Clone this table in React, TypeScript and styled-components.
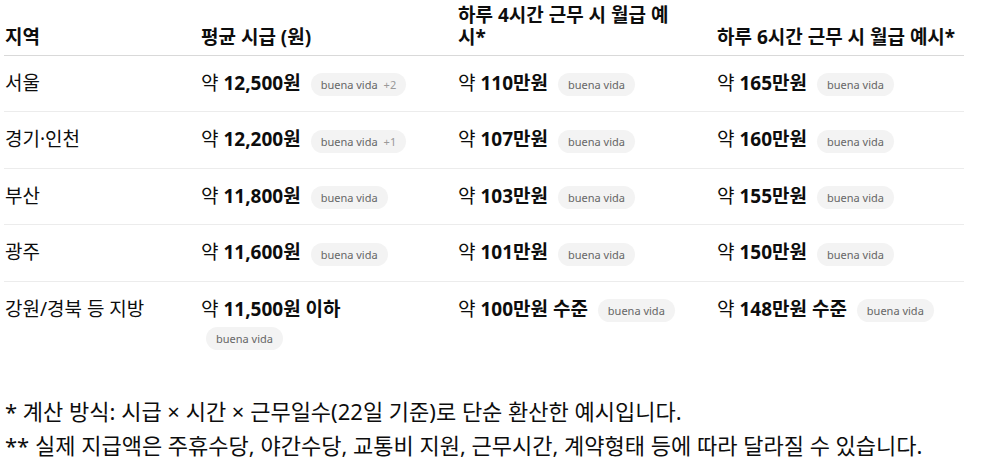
import styled, { createGlobalStyle } from 'styled-components';

type Badge = { label: string; extra?: string };
type Cell = { value: string; badge?: Badge };
type Row = { region: string; hourly: Cell; four: Cell; six: Cell };

const bv: Badge = { label: 'buena vida' };

const rows: Row[] = [
  {
    region: '서울',
    hourly: { value: '12,500원', badge: { label: 'buena vida', extra: '+2' } },
    four: { value: '110만원', badge: bv },
    six: { value: '165만원', badge: bv },
  },
  {
    region: '경기·인천',
    hourly: { value: '12,200원', badge: { label: 'buena vida', extra: '+1' } },
    four: { value: '107만원', badge: bv },
    six: { value: '160만원', badge: bv },
  },
  {
    region: '부산',
    hourly: { value: '11,800원', badge: bv },
    four: { value: '103만원', badge: bv },
    six: { value: '155만원', badge: bv },
  },
  {
    region: '광주',
    hourly: { value: '11,600원', badge: bv },
    four: { value: '101만원', badge: bv },
    six: { value: '150만원', badge: bv },
  },
  {
    region: '강원/경북 등 지방',
    hourly: { value: '11,500원 이하', badge: bv },
    four: { value: '100만원 수준', badge: bv },
    six: { value: '148만원 수준', badge: bv },
  },
];

// right padding per column (narrows the text area so headers / badges wrap like the source)
const padRight = [36, 44, 36, 0];

function Amount({ cell }: { cell: Cell }) {
  return (
    <>
      약 <Strong>{cell.value}</Strong>{' '}
      {cell.badge && (
        <Pill>
          {cell.badge.label}
          {cell.badge.extra && <PillExtra>{cell.badge.extra}</PillExtra>}
        </Pill>
      )}
    </>
  );
}

function App() {
  const heads = ['지역', '평균 시급 (원)', '하루 4시간 근무 시 월급 예시*', '하루 6시간 근무 시 월급 예시*'];
  return (
    <>
      <GlobalStyle />
      <Page>
        <Table>
          <colgroup>
            <col style={{ width: 196 }} />
            <col style={{ width: 257 }} />
            <col style={{ width: 259 }} />
            <col style={{ width: 248 }} />
          </colgroup>
          <thead>
            <tr>
              {heads.map((h, i) => (
                <Th key={h} pr={padRight[i]}>{h}</Th>
              ))}
            </tr>
          </thead>
          <tbody>
            {rows.map((r, i) => (
              <Tr key={r.region} last={i === rows.length - 1}>
                <Td pr={padRight[0]}>{r.region}</Td>
                <Td pr={padRight[1]}><Amount cell={r.hourly} /></Td>
                <Td pr={padRight[2]}><Amount cell={r.four} /></Td>
                <Td pr={padRight[3]}><Amount cell={r.six} /></Td>
              </Tr>
            ))}
          </tbody>
        </Table>
        <Notes>
          <Note>* 계산 방식: 시급 × 시간 × 근무일수(22일 기준)로 단순 환산한 예시입니다.</Note>
          <Note>** 실제 지급액은 주휴수당, 야간수당, 교통비 지원, 근무시간, 계약형태 등에 따라 달라질 수 있습니다.</Note>
        </Notes>
      </Page>
    </>
  );
}

// Styled Components
const GlobalStyle = createGlobalStyle`
  body {
    margin: 0;
    background: #fff;
    color: #0d0d0d;
    font-family: "Noto Sans", "Noto Sans CJK KR", sans-serif;
  }
`;

const Page = styled.div`
  padding: 0 4px;
`;

const Table = styled.table`
  width: 960px;
  border-collapse: collapse;
  table-layout: fixed;
  font-size: 19px;
`;

const Th = styled.th<{ pr: number }>`
  text-align: left;
  vertical-align: bottom;
  font-weight: 700;
  line-height: 22px;
  padding: 4px ${p => p.pr}px 7px 1px;
  border-bottom: 1px solid #d9d9d9;
`;

const Tr = styled.tr<{ last?: boolean }>`
  border-bottom: ${p => (p.last ? 'none' : '1px solid #ececec')};
`;

const Td = styled.td<{ pr: number }>`
  vertical-align: baseline;
  line-height: 28px;
  padding: 13px ${p => p.pr}px 12px 1px;
`;

const Strong = styled.strong`
  font-weight: 700;
`;

const Pill = styled.span`
  display: inline-block;
  vertical-align: middle;
  margin: 3px 0 3px 5px;
  height: 23px;
  line-height: 23px;
  padding: 0 10px;
  border-radius: 12px;
  background: #f3f3f3;
  color: #666;
  font-size: 11px;
  font-weight: 400;
`;

const PillExtra = styled.span`
  margin-left: 6px;
  color: #999;
`;

const Notes = styled.div`
  padding: 29px 1px 0;
  font-size: 22px;
`;

const Note = styled.p`
  margin: 0;
  line-height: 34px;
`;

export default App;
